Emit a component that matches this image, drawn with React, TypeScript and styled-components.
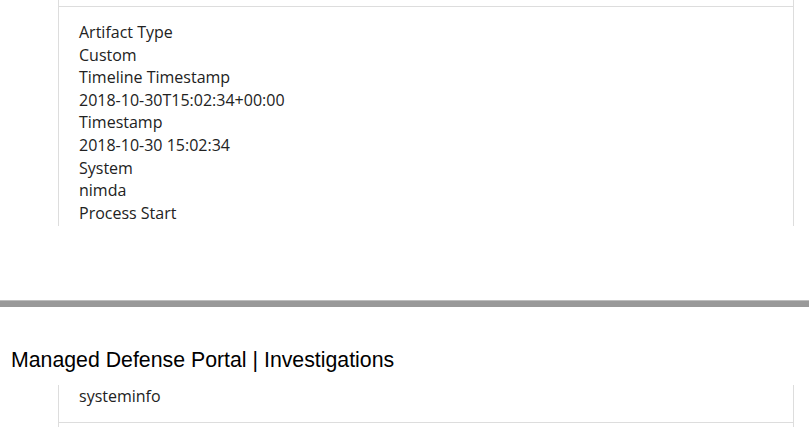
import React from "react";
import styled, { createGlobalStyle } from "styled-components";

const Global = createGlobalStyle`
  html, body { margin: 0; padding: 0; background: #fff; }
  body { width: 809px; height: 427px; overflow: hidden; }
`;

const Page = styled.div`
  display: flex;
  flex-direction: column;
  width: 809px;
`;

const Frame = styled.div<{ $height?: number; $gap?: number }>`
  box-sizing: border-box;
  flex-shrink: 0;
  margin-left: 58px;
  margin-top: ${(p) => p.$gap ?? 0}px;
  width: 736px;
  border-left: 1px solid #dddddd;
  border-right: 1px solid #dddddd;
  ${(p) => (p.$height ? `height: ${p.$height}px; overflow: hidden;` : "")}
  display: flex;
  flex-direction: column;
`;

const RowStub = styled.div<{ $h: number }>`
  flex-shrink: 0;
  height: ${(p) => p.$h}px;
`;

const Cell = styled.div<{ $top: number; $bottom: number; $border?: boolean }>`
  flex-shrink: 0;
  padding: ${(p) => p.$top}px 20px ${(p) => p.$bottom}px 20px;
  border-top: ${(p) => (p.$border ? "1px solid #dddddd" : "none")};
  border-bottom: ${(p) => (p.$border ? "none" : "1px solid #dddddd")};
  font-family: "Open Sans", "Noto Sans", sans-serif;
  font-size: 16px;
  line-height: 22.6px;
  color: #222222;
`;

const Line = styled.div``;

const PageBreak = styled.div`
  flex-shrink: 0;
  margin-top: 74px;
  height: 7px;
  box-sizing: border-box;
  background: #999999;
  border-top: 1px solid #bdbdbd;
`;

const Heading = styled.div`
  flex-shrink: 0;
  margin-top: 41px;
  padding-left: 11px;
  font-family: "Liberation Sans", Arial, sans-serif;
  font-size: 21.3px;
  line-height: 24px;
  color: #000;
  white-space: nowrap;
`;

const fields = [
  "Artifact Type",
  "Custom",
  "Timeline Timestamp",
  "2018-10-30T15:02:34+00:00",
  "Timestamp",
  "2018-10-30 15:02:34",
  "System",
  "nimda",
  "Process Start",
];

export default function App() {
  return (
    <Page>
      <Global />
      <Frame $height={226}>
        <RowStub $h={6} />
        <Cell $top={14} $bottom={0} $border>
          {fields.map((f, i) => (
            <Line key={i}>{f}</Line>
          ))}
        </Cell>
      </Frame>
      <PageBreak />
      <Heading>Managed Defense Portal | Investigations</Heading>
      <Frame $gap={13}>
        <Cell $top={0} $bottom={14}>
          <Line>systeminfo</Line>
        </Cell>
        <RowStub $h={10} />
      </Frame>
    </Page>
  );
}
